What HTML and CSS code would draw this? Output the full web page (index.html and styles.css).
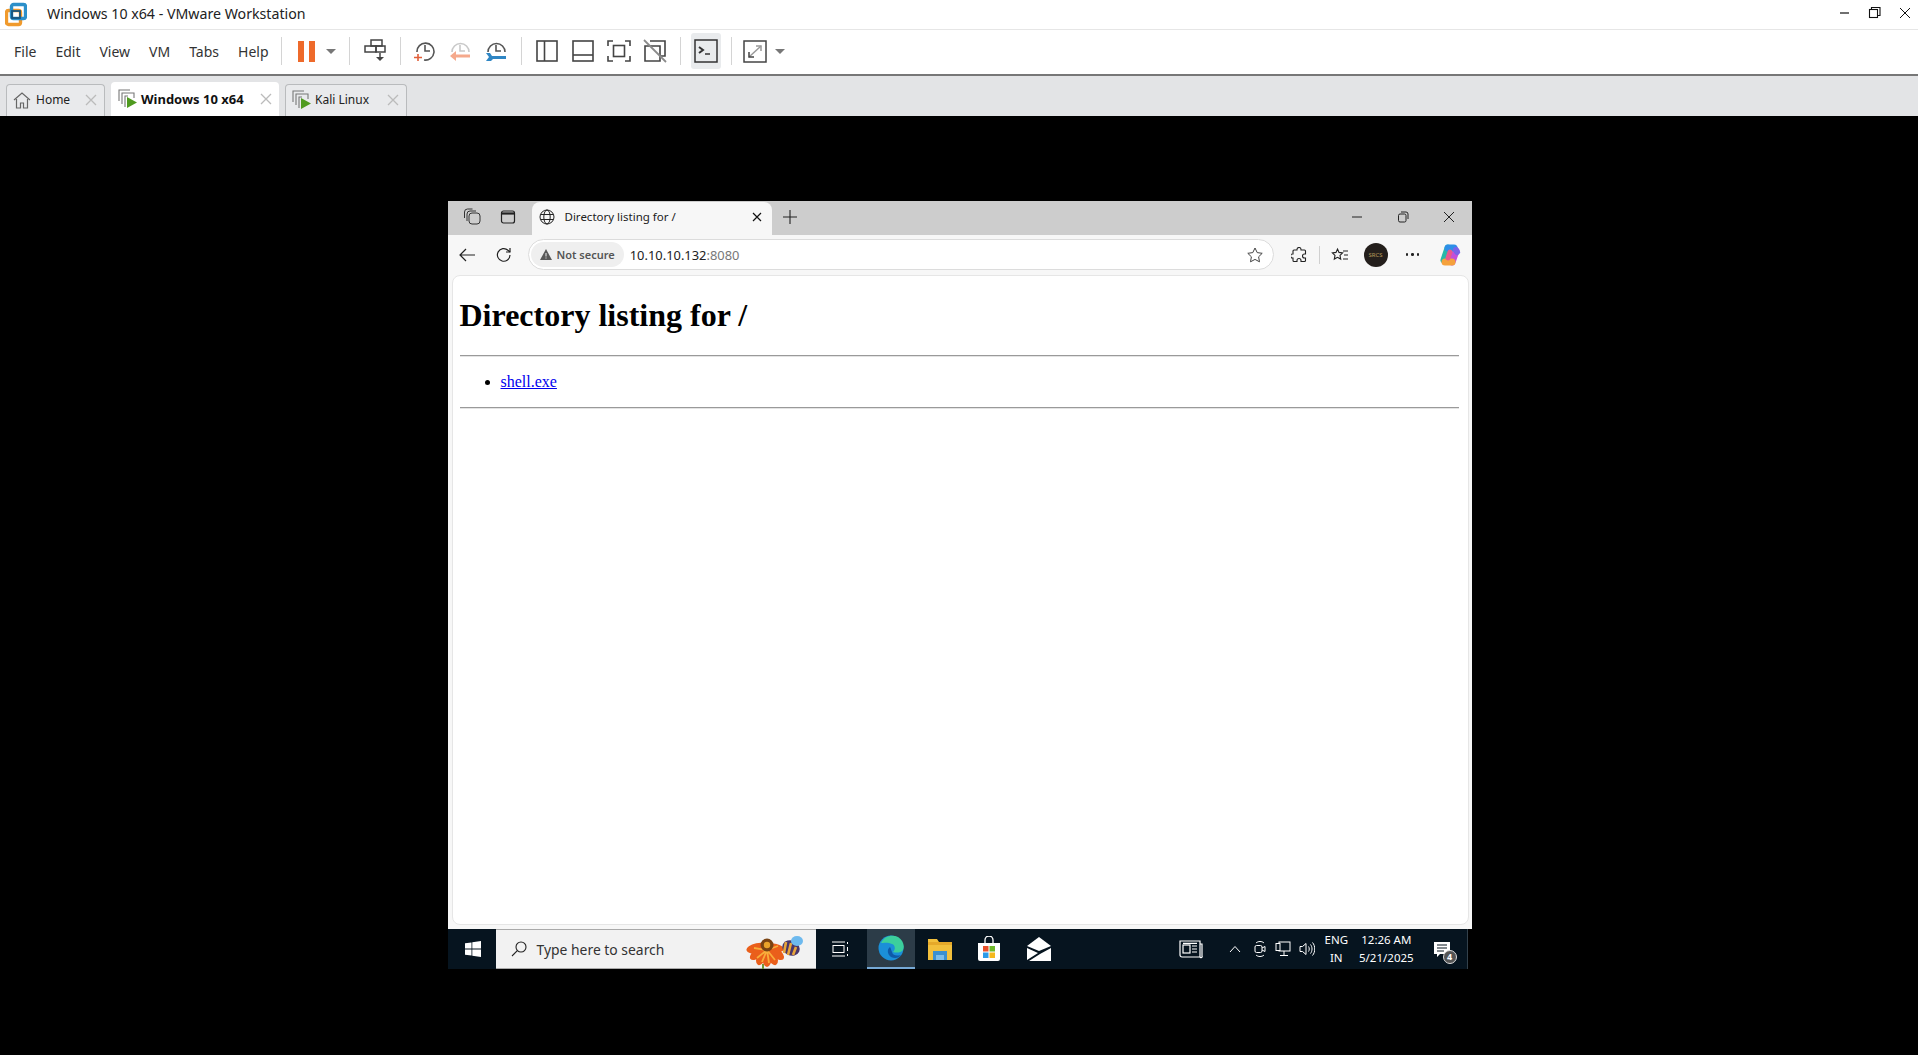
FILE: index.html
```html
<!DOCTYPE html>
<html>
<head>
<meta charset="UTF-8">
<title>Windows 10 x64 - VMware Workstation</title>
<link rel="stylesheet" href="styles.css">
</head>
<body>
<div class="app">

  <!-- title bar -->
  <div class="titlebar">
    <svg class="vm_logo" width="22" height="26" viewBox="0 0 22 26">
      <rect x="1.500" y="8.500" width="14" height="14" rx="2" fill="none" stroke="#f09a2c" stroke-width="3.400"/>
      <rect x="6.500" y="2.500" width="14" height="14" rx="2" fill="none" stroke="#2c8fc9" stroke-width="3.400"/>
      <rect x="7" y="9" width="8" height="7" fill="none" stroke="#17557f" stroke-width="1.800"/>
    </svg>
    <span class="title_text">Windows 10 x64 - VMware Workstation</span>
    <div class="win_ctrls">
      <svg width="14" height="14" viewBox="0 0 14 14"><path d="M2 7h9" stroke="#111" stroke-width="1.200"/></svg>
      <svg width="14" height="14" viewBox="0 0 14 14" fill="none" stroke="#111" stroke-width="1.100"><rect x="1.500" y="3.500" width="8" height="8"/><path d="M3.500 3.500v-2h8.500v8h-2.500"/></svg>
      <svg width="14" height="14" viewBox="0 0 14 14"><path d="M2 2l10 10M12 2L2 12" stroke="#111" stroke-width="1"/></svg>
    </div>
  </div>

  <!-- menu and toolbar -->
  <div class="toolbar">
    <div class="menu">
      <span>File</span><span>Edit</span><span>View</span><span>VM</span><span>Tabs</span><span>Help</span>
    </div>
    <i class="sep sep_a"></i>
    <div class="pause"><b></b><b></b></div>
    <i class="caret caret_a"></i>
    <i class="sep sep_b"></i>
    <svg class="tool t_send" width="22" height="24" viewBox="0 0 22 24" fill="none" stroke="#444" stroke-width="1.500">
      <rect x="7" y="1" width="11" height="6"/><rect x="1" y="7" width="11" height="6"/><rect x="12" y="7" width="9" height="6"/>
      <path d="M16 14v5"/><path d="M12 18h8l-4 4z" fill="#444" stroke="none"/>
    </svg>
    <i class="sep sep_c"></i>
    <svg class="tool t_clock1" width="22" height="22" viewBox="0 0 22 22" fill="none">
      <path d="M4 12a8.500 8.500 0 1 1 7 8" stroke="#555" stroke-width="1.600"/><path d="M12 5v6h5" stroke="#555" stroke-width="1.600"/>
      <path d="M5 14v7M1 17.500h8" stroke="#e2603a" stroke-width="1.600"/>
    </svg>
    <svg class="tool t_clock2" width="22" height="22" viewBox="0 0 22 22" fill="none">
      <path d="M3 12a8.500 8.500 0 1 1 17 0" stroke="#c9c9c9" stroke-width="1.600"/><path d="M11 5v6h5" stroke="#c9c9c9" stroke-width="1.600"/>
      <path d="M21 16H5" stroke="#f5a98c" stroke-width="3"/><path d="M7 11l-6 5 6 5z" fill="#f5a98c"/>
    </svg>
    <svg class="tool t_clock3" width="22" height="22" viewBox="0 0 22 22" fill="none">
      <path d="M3 12a8.500 8.500 0 1 1 17 0" stroke="#555" stroke-width="1.600"/><path d="M11 5v6h5" stroke="#555" stroke-width="1.600"/>
      <path d="M1 13h4l2 3h14v3H8l-2 2H1l3-4z" fill="#2f86c4"/>
    </svg>
    <i class="sep sep_d"></i>
    <svg class="tool t_v1" width="22" height="22" viewBox="0 0 22 22" fill="none" stroke="#444" stroke-width="1.600"><rect x="1" y="1" width="20" height="20"/><path d="M8.500 1v20"/></svg>
    <svg class="tool t_v2" width="22" height="22" viewBox="0 0 22 22" fill="none" stroke="#444" stroke-width="1.600"><rect x="1" y="1" width="20" height="20"/><path d="M1 15h20"/></svg>
    <svg class="tool t_v3" width="24" height="22" viewBox="0 0 24 22" fill="none" stroke="#444" stroke-width="1.600"><path d="M1 6V1h5M18 1h5v5M23 16v5h-5M6 21H1v-5"/><rect x="6.500" y="5.500" width="11" height="11"/></svg>
    <svg class="tool t_v4" width="24" height="24" viewBox="0 0 24 24" fill="none" stroke="#444" stroke-width="1.600"><path d="M7 2h15v15h-5"/><path d="M2 7h15v15H2z"/><path d="M1 1l22 22" stroke="#8a8a8a" stroke-width="1.800"/></svg>
    <i class="sep sep_e"></i>
    <div class="term_btn">
      <svg width="24" height="24" viewBox="0 0 24 24" fill="none" stroke="#333" stroke-width="1.500"><rect x="1" y="1" width="22" height="22"/><path d="M5 8l4 3-4 3" stroke-width="2"/><path d="M11 15h5"/></svg>
    </div>
    <i class="sep sep_f"></i>
    <svg class="tool t_full" width="24" height="23" viewBox="0 0 24 23" fill="none" stroke="#444" stroke-width="1.500"><rect x="1" y="1" width="22" height="21"/><path d="M6 17l12-11" stroke="#999"/><path d="M6 12v5h5"/><path d="M13 6h5v5" stroke="#999"/></svg>
    <i class="caret caret_b"></i>
  </div>

  <!-- vm tabs -->
  <div class="tabstrip">
    <div class="tab tab_home">
      <svg width="18" height="18" viewBox="0 0 18 18" fill="none" stroke="#666" stroke-width="1.200"><path d="M1 9l8-7 8 7M3.500 8v9h4v-5h3v5h4V8"/></svg>
      <span>Home</span>
      <svg class="tab_close" width="12" height="12" viewBox="0 0 12 12"><path d="M1 1l10 10M11 1L1 11" stroke="#bbb" stroke-width="1.300"/></svg>
    </div>
    <div class="tab tab_active">
      <svg width="20" height="20" viewBox="0 0 20 20" fill="none" stroke="#777" stroke-width="1.100"><path d="M1 12V1h11"/><path d="M4 15V4h12v5"/><path d="M7 18V7h3"/><path d="M9 8l10 5.500L9 19z" fill="#4f9a1f" stroke="none"/></svg>
      <span>Windows 10 x64</span>
      <svg class="tab_close" width="12" height="12" viewBox="0 0 12 12"><path d="M1 1l10 10M11 1L1 11" stroke="#bbb" stroke-width="1.300"/></svg>
    </div>
    <div class="tab tab_kali">
      <svg width="20" height="20" viewBox="0 0 20 20" fill="none" stroke="#777" stroke-width="1.100"><path d="M1 12V1h11"/><path d="M4 15V4h12v5"/><path d="M7 18V7h3"/><path d="M9 8l10 5.500L9 19z" fill="#4f9a1f" stroke="none"/></svg>
      <span>Kali Linux</span>
      <svg class="tab_close" width="12" height="12" viewBox="0 0 12 12"><path d="M1 1l10 10M11 1L1 11" stroke="#bbb" stroke-width="1.300"/></svg>
    </div>
  </div>

  <!-- guest screen -->
  <div class="stage">
    <div class="guest">

      <div class="edge_tabs">
        <svg class="etool e_work" width="18" height="18" viewBox="0 0 18 18" fill="none" stroke="#333" stroke-width="1"><rect x="6" y="5" width="11" height="11" rx="3"/><path d="M4 13V6a3 3 0 0 1 3-3h6"/><path d="M1.500 10V4a3 3 0 0 1 3-3h5"/></svg>
        <svg class="etool e_tabs" width="16" height="16" viewBox="0 0 16 16" fill="none" stroke="#222" stroke-width="1.200"><rect x="1.500" y="2" width="13" height="12" rx="2"/><path d="M1.500 4.500h13" stroke-width="2.200"/></svg>
        <div class="edge_tab">
          <svg width="16" height="16" viewBox="0 0 16 16" fill="none" stroke="#222" stroke-width="1"><circle cx="8" cy="8" r="7"/><ellipse cx="8" cy="8" rx="3.200" ry="7"/><path d="M1.500 5.500h13M1.500 10.500h13"/></svg>
          <span>Directory listing for /</span>
          <svg class="tab_x" width="10" height="10" viewBox="0 0 10 10"><path d="M1 1l8 8M9 1L1 9" stroke="#111" stroke-width="1.200"/></svg>
        </div>
        <svg class="e_plus" width="14" height="14" viewBox="0 0 14 14"><path d="M7 0v14M0 7h14" stroke="#222" stroke-width="1.100"/></svg>
        <div class="edge_ctrls">
          <svg width="12" height="12" viewBox="0 0 12 12"><path d="M1 6h10" stroke="#222" stroke-width="1"/></svg>
          <svg width="12" height="12" viewBox="0 0 12 12" fill="none" stroke="#222" stroke-width="1"><rect x="1.500" y="3" width="7.500" height="8" rx="1.500"/><path d="M4 1h5a2 2 0 0 1 2 2v5"/></svg>
          <svg width="12" height="12" viewBox="0 0 12 12"><path d="M1 1l10 10M11 1L1 11" stroke="#222" stroke-width="1"/></svg>
        </div>
      </div>

      <div class="edge_bar">
        <svg class="bar_back" width="18" height="16" viewBox="0 0 18 16" fill="none" stroke="#222" stroke-width="1.200"><path d="M17 8H2M8 2L2 8l6 6"/></svg>
        <svg class="bar_reload" width="16" height="16" viewBox="0 0 16 16" fill="none" stroke="#222" stroke-width="1.200"><path d="M14 8a6.300 6.300 0 1 1-2-4.700L14 5"/><path d="M14 1v4h-4"/></svg>
        <div class="address">
          <div class="not_secure">
            <svg width="12" height="11" viewBox="0 0 12 11"><path d="M6 0l6 11H0z" fill="#5a5a5a"/><path d="M6 4v3.500M6 8.500v1" stroke="#eee" stroke-width="1"/></svg>
            <span>Not secure</span>
          </div>
          <span class="url">10.10.10.132<span class="port">:8080</span></span>
          <svg class="addr_star" width="16" height="16" viewBox="0 0 16 16" fill="none" stroke="#444" stroke-width="1"><path d="M8 1l2.200 4.600 5 .7-3.600 3.500.9 5L8 12.400 3.500 14.800l.9-5L.8 6.300l5-.7z"/></svg>
        </div>
        <svg class="bar_ext" width="16" height="16" viewBox="0 0 16 16" fill="none" stroke="#222" stroke-width="1.100"><path d="M6 2.500a2 2 0 0 1 4 0V3h3.500a1 1 0 0 1 1 1v3h-1a2 2 0 0 0 0 4h1v2.500a1 1 0 0 1-1 1H10v-1a2 2 0 0 0-4 0v1H3a1 1 0 0 1-1-1V11h-.5a2 2 0 0 1 0-4H2V4a1 1 0 0 1 1-1h3z"/></svg>
        <i class="bar_sep"></i>
        <svg class="bar_fav" width="18" height="16" viewBox="0 0 18 16" fill="none" stroke="#222" stroke-width="1.100"><path d="M6.500 2l1.500 3.400 3.600.5-2.600 2.500.7 3.700-3.200-1.800-3.200 1.800.7-3.700L1.400 5.900 5 5.400z"/><path d="M12 4h5M13 8h4M12 12h5"/></svg>
        <div class="avatar">SRCS</div>
        <div class="bar_dots"><b></b><b></b><b></b></div>
        <svg class="bar_copilot" width="22" height="22" viewBox="0 0 22 22" fill="none" stroke-linecap="round">
          <path d="M17 7l-4 11" stroke="#c44fd8" stroke-width="7"/>
          <path d="M9 4l-4 12" stroke="#28b8a8" stroke-width="7"/>
          <path d="M9 4h6" stroke="#2d8fe8" stroke-width="7"/>
          <path d="M6 18h7" stroke="#f5a13c" stroke-width="7"/>
          <path d="M11 8l-2 6" stroke="#e8578f" stroke-width="5"/>
          <path d="M17 6l1 2" stroke="#7a63e8" stroke-width="6"/>
        </svg>
      </div>

      <div class="edge_page">
        <div class="page_card">
          <h1>Directory listing for /</h1>
          <hr>
          <ul>
            <li><a href="#">shell.exe</a></li>
          </ul>
          <hr>
        </div>
      </div>

      <div class="taskbar">
        <svg class="tb_start" width="16" height="16" viewBox="0 0 16 16" fill="#fff"><path d="M0 2.300l6.500-.9v6.200H0zM7.300 1.300L16 0v7.600H7.300zM0 8.400h6.500v6.200L0 13.700zM7.300 8.400H16V16l-8.700-1.200z"/></svg>
        <div class="tb_search">
          <svg width="16" height="16" viewBox="0 0 16 16" fill="none" stroke="#222" stroke-width="1.100"><circle cx="10" cy="6" r="5"/><path d="M6.300 9.700L1 15"/></svg>
          <span>Type here to search</span>
          <svg class="flower" width="58" height="39" viewBox="0 0 58 39">
            <path d="M17 34v5" stroke="#6a9a3a" stroke-width="2"/>
            <g fill="#ea5f1b">
              <ellipse cx="21" cy="26" rx="5" ry="11" transform="rotate(78 21 16)"/>
              <ellipse cx="21" cy="26" rx="5" ry="11" transform="rotate(52 21 16)"/>
              <ellipse cx="21" cy="26" rx="5" ry="11" transform="rotate(26 21 16)"/>
              <ellipse cx="21" cy="26" rx="5" ry="11" transform="rotate(0 21 16)"/>
              <ellipse cx="21" cy="26" rx="5" ry="11" transform="rotate(-26 21 16)"/>
              <ellipse cx="21" cy="26" rx="5" ry="11" transform="rotate(-52 21 16)"/>
              <ellipse cx="21" cy="25" rx="4" ry="8" transform="rotate(-78 21 16)"/>
            </g>
            <path d="M21 20l-13-2M21 20l-10 8M21 20l-5 12M21 20l2 13M21 20l8 10M21 20l11-4" stroke="#f8ad3a" stroke-width="1.800"/>
            <circle cx="21" cy="15" r="6.500" fill="#7a4312"/><circle cx="21" cy="15" r="3.200" fill="#e9a32a"/>
            <ellipse cx="45" cy="18" rx="9" ry="7.500" fill="#49356b" transform="rotate(25 45 18)"/>
            <path d="M40 12l-2 11M45 13l-3 12M50 17l-3 8" stroke="#e8a53a" stroke-width="2.600"/>
            <ellipse cx="51" cy="11" rx="6" ry="5" fill="#6db9ee"/>
          </svg>
        </div>
        <svg class="tb_view" width="16" height="16" viewBox="0 0 16 16" fill="none" stroke="#fff" stroke-width="1"><path d="M0 1h13M0 15h13"/><rect x="1" y="4.500" width="11" height="7"/><path d="M15.500 1v2M15.500 6v4M15.500 13v2"/></svg>
        <div class="tb_edge">
          <svg width="26" height="26" viewBox="0 0 26 26">
            <circle cx="13" cy="13" r="12.500" fill="#1b8fd8"/>
            <path d="M3 8C6 1 14-1 20 2c5 3 7 9 5 13-2 3-7 3-10 2 3-3 2-7-1-8C10 7 5 8 3 8z" fill="#3ccf9c"/>
            <path d="M12 12c-3 2-3 7 1 10 4 2 8 1 10-2-4 1-8 1-9-3-1-2-1-4-2-5z" fill="#0e5aa8"/>
          </svg>
        </div>
        <svg class="tb_app tb_files" width="24" height="22" viewBox="0 0 24 22"><path d="M0 1h9l2 3h13v18H0z" fill="#f2c03c"/><rect y="4" width="24" height="3" fill="#e5a92a"/><path d="M5 13h14v9h-3v-5H8v5H5z" fill="#3b90d0"/><rect x="8" y="17" width="8" height="5" fill="#7dbde8"/></svg>
        <svg class="tb_app tb_store" width="24" height="26" viewBox="0 0 24 26"><path d="M1 7h22v16a2 2 0 0 1-2 2H3a2 2 0 0 1-2-2z" fill="#fff"/><path d="M8 7V4a4 4 0 0 1 8 0v3" fill="none" stroke="#fff" stroke-width="1.300"/><rect x="6" y="10" width="5.500" height="5.500" fill="#e8502a"/><rect x="12.500" y="10" width="5.500" height="5.500" fill="#6eb82a"/><rect x="6" y="16.500" width="5.500" height="5.500" fill="#2a9ae8"/><rect x="12.500" y="16.500" width="5.500" height="5.500" fill="#f5b81e"/></svg>
        <svg class="tb_app tb_mail" width="24" height="24" viewBox="0 0 24 24" fill="#fff"><path d="M12 0l12 9-12 5L0 9z"/><path d="M0 11l11 5-11 7zM24 11v13H2l11-7z"/></svg>
        <svg class="tb_news" width="24" height="20" viewBox="0 0 24 20" fill="none" stroke="#fff" stroke-width="1.200"><path d="M1 2h20v16H3a2 2 0 0 1-2-2z"/><path d="M21 5h2v12a1 1 0 0 1-2 1"/><rect x="4" y="6" width="7" height="8"/><path d="M13 7h5M13 10h5M13 13h5M4 4.300h14"/></svg>
        <svg class="tb_chev" width="12" height="8" viewBox="0 0 12 8" fill="none" stroke="#fff" stroke-width="1"><path d="M1 7l5-5.500L11 7"/></svg>
        <svg class="tb_tray t_meet" width="12" height="18" viewBox="0 0 12 18" fill="none" stroke="#fff" stroke-width="1"><rect x="1" y="5.500" width="7" height="7" rx="1.500"/><path d="M8 8l3-1.500v5L8 10M2 3c2-2 6-2 8 0M2 15c2 2 6 2 8 0"/></svg>
        <svg class="tb_tray t_net" width="16" height="16" viewBox="0 0 16 16" fill="none" stroke="#fff" stroke-width="1"><rect x="4" y="1" width="11" height="9"/><rect x="1" y="2.500" width="4" height="7" fill="#06141f"/><path d="M9 10v4M5 14.500h8"/></svg>
        <svg class="tb_tray t_vol" width="16" height="16" viewBox="0 0 16 16" fill="none" stroke="#fff" stroke-width="1"><path d="M1 5.500h2.500L7 2.500v11l-3.500-3H1z"/><path d="M9.500 5.500c1 1.500 1 3.500 0 5M11.500 3.500c2 2.500 2 6.500 0 9M13.500 1.500c3 3.500 3 9.500 0 13"/></svg>
        <div class="tb_lang"><span>ENG</span><span>IN</span></div>
        <div class="tb_clock"><span>12:26 AM</span><span>5/21/2025</span></div>
        <div class="tb_note">
          <svg width="16" height="16" viewBox="0 0 16 16" fill="#fff"><path d="M0 0h16v12H6l-3 3v-3H0z"/><path d="M3 3h10M3 6h10M3 9h7" stroke="#06141f" stroke-width="1"/></svg>
          <b>4</b>
        </div>
      </div>

    </div>
  </div>

</div>
</body>
</html>
```

FILE: styles.css
```css
html, body {
  margin: 0;
  height: 100%;
  overflow: hidden;
}

.app {
  display: flex;
  flex-direction: column;
  height: 1055px;
  font-family: "Noto Sans", "Open Sans", sans-serif;
  color: #222;
  background: #000;
}

/* title bar */
.titlebar {
  height: 29px;
  display: flex;
  align-items: center;
  background: #fff;
  border-bottom: 1px solid #e6e6e6;
  flex: none;
}
.vm_logo {
  margin-left: 5px;
  flex: none;
}
.title_text {
  margin-left: 20px;
  padding-bottom: 2px;
  font-size: 14.200px;
  color: #222;
}
.win_ctrls {
  margin-left: auto;
  margin-right: 6px;
  padding-bottom: 3px;
  display: flex;
  gap: 16px;
}

/* toolbar */
.toolbar {
  height: 42px;
  padding-bottom: 2px;
  display: flex;
  align-items: center;
  background: #fff;
  border-bottom: 2px solid #777;
  flex: none;
}
.menu {
  display: flex;
  gap: 19px;
  margin-left: 14px;
  font-size: 14px;
  color: #333;
}
.sep {
  width: 1px;
  height: 28px;
  background: #d4d4d4;
  flex: none;
}
.sep_a { margin-left: 12px; }
.pause {
  display: flex;
  gap: 5px;
  margin-left: 16px;
}
.pause b {
  width: 6px;
  height: 21px;
  background: #ee6a2b;
}
.caret {
  width: 0;
  height: 0;
  border-left: 5px solid transparent;
  border-right: 5px solid transparent;
  border-top: 5px solid #777;
  flex: none;
}
.caret_a { margin-left: 11px; }
.sep_b { margin-left: 13px; }
.tool { flex: none; }
.t_send { margin-left: 14px; }
.sep_c { margin-left: 14px; }
.t_clock1 { margin-left: 12px; }
.t_clock2 { margin-left: 14px; }
.t_clock3 { margin-left: 14px; }
.sep_d { margin-left: 14px; }
.t_v1 { margin-left: 14px; }
.t_v2 { margin-left: 14px; }
.t_v3 { margin-left: 13px; }
.t_v4 { margin-left: 12px; }
.sep_e { margin-left: 13px; }
.term_btn {
  width: 30px;
  height: 36px;
  margin-left: 10px;
  display: flex;
  align-items: center;
  justify-content: center;
  background: #e9ebed;
  border-radius: 3px;
}
.sep_f { margin-left: 10px; }
.t_full { margin-left: 11px; }
.caret_b { margin-left: 8px; }

/* vm tabs */
.tabstrip {
  height: 40px;
  display: flex;
  align-items: flex-end;
  gap: 6px;
  padding-left: 6px;
  background: #e3e4e6;
  flex: none;
}
.tab {
  height: 32px;
  box-sizing: border-box;
  display: flex;
  align-items: center;
  padding-left: 6px;
  padding-bottom: 2px;
  font-size: 12px;
  background: #e9eaec;
  border: 1px solid #b9bbbd;
  border-bottom: none;
  border-radius: 4px 4px 0 0;
  color: #222;
}
.tab_close {
  margin-left: auto;
  margin-right: 7px;
}
.tab span { margin-left: 5px; }
.tab_home { width: 99px; }
.tab_active {
  width: 168px;
  height: 34px;
  padding-left: 7px;
  padding-bottom: 0;
  background: #fff;
  border: none;
  font-weight: 700;
  font-size: 13px;
  color: #111;
}
.tab_active span { margin-left: 3px; }
.tab_kali { width: 122px; }
.tab_kali span { margin-left: 3px; }

/* guest */
.stage {
  flex: 1;
  display: flex;
  justify-content: center;
  padding-top: 85px;
  background: #000;
}
.guest {
  width: 1024px;
  height: 768px;
  margin-left: 1px;
  display: flex;
  flex-direction: column;
  background: #f7f7f7;
}

.edge_tabs {
  height: 34px;
  padding-bottom: 2px;
  box-sizing: border-box;
  display: flex;
  align-items: center;
  background: #cdcdcd;
  flex: none;
}
.etool { flex: none; }
.e_work { margin-left: 15px; }
.e_tabs { margin-left: 19px; }
.edge_tab {
  width: 240px;
  height: 33px;
  margin-left: 16px;
  margin-bottom: -2px;
  align-self: flex-end;
  display: flex;
  align-items: center;
  padding-left: 7px;
  padding-bottom: 4px;
  box-sizing: border-box;
  background: #f7f7f7;
  border-radius: 8px 8px 0 0;
  font-size: 11.500px;
  color: #222;
}
.edge_tab span { margin-left: 10px; }
.tab_x { margin-left: auto; margin-right: 10px; }
.e_plus { margin-left: 11px; }
.edge_ctrls {
  margin-left: auto;
  margin-right: 17px;
  display: flex;
  gap: 34px;
}

.edge_bar {
  height: 38px;
  box-sizing: border-box;
  padding-top: 1px;
  display: flex;
  align-items: center;
  background: #f7f7f7;
  flex: none;
}
.bar_back { margin-left: 10px; flex: none; }
.bar_reload { margin-left: 20px; flex: none; }
.address {
  width: 746px;
  height: 31px;
  margin-left: 16px;
  display: flex;
  align-items: center;
  box-sizing: border-box;
  background: #fff;
  border: 1px solid #dcdcdc;
  border-radius: 16px;
  flex: none;
}
.not_secure {
  height: 25px;
  margin-left: 2px;
  padding: 0 9px;
  display: flex;
  align-items: center;
  gap: 5px;
  background: #efefef;
  border-radius: 13px;
  font-size: 11px;
  font-weight: 600;
  color: #555;
}
.url {
  margin-left: 6px;
  font-size: 12.900px;
  color: #222;
}
.port { color: #777; }
.addr_star { margin-left: auto; margin-right: 10px; }
.bar_ext { margin-left: 17px; flex: none; }
.bar_sep {
  width: 1px;
  height: 18px;
  margin-left: 12px;
  background: #d0d0d0;
  flex: none;
}
.bar_fav { margin-left: 11px; flex: none; }
.avatar {
  width: 24px;
  height: 24px;
  margin-left: 15px;
  display: flex;
  align-items: center;
  justify-content: center;
  border-radius: 50%;
  background: #241f1c;
  color: #b89a5a;
  font-size: 6px;
  flex: none;
}
.bar_dots {
  display: flex;
  gap: 3px;
  margin-left: 18px;
}
.bar_dots b {
  width: 2.500px;
  height: 2.500px;
  border-radius: 50%;
  background: #222;
}
.bar_copilot { margin-left: 20px; flex: none; }

.edge_page {
  flex: 1;
  padding: 2px 3px 4px 4px;
  min-height: 0;
}
.page_card {
  height: 100%;
  box-sizing: border-box;
  padding: 8px 9px 0 7px;
  background: #fff;
  border: 1px solid #e6e6e6;
  border-radius: 8px;
  font-family: "Liberation Serif", serif;
  font-size: 16px;
  color: #000;
}
.page_card h1 {
  margin: 13px 0 21px;
  font-size: 32px;
  line-height: 37px;
}
.page_card hr {
  margin: 0;
  border: none;
  border-top: 1px solid #9a9a9a;
  border-bottom: 1px solid #e4e4e4;
}
.page_card ul {
  margin: 16px 0;
  padding-left: 41px;
}
.page_card a { color: #0000ee; }

/* taskbar */
.taskbar {
  height: 40px;
  display: flex;
  align-items: center;
  background: #06141f;
  border-right: 4px solid #000;
  box-shadow: inset -1px 0 #33414b;
  color: #fff;
  flex: none;
}
.tb_start { margin-left: 17px; flex: none; }
.tb_search {
  width: 320px;
  height: 40px;
  margin-left: 15px;
  box-sizing: border-box;
  display: flex;
  align-items: center;
  padding-left: 15px;
  background: #f2f2f2;
  border-top: 1px solid #a9a9a9;
  border-bottom: 1px solid #a9a9a9;
  font-size: 13.900px;
  color: #333;
  flex: none;
}
.tb_search span { margin-left: 10px; }
.flower { margin-left: auto; margin-right: 12px; }
.tb_view { margin-left: 16px; flex: none; }
.tb_edge {
  width: 48px;
  height: 40px;
  margin-left: 19px;
  box-sizing: border-box;
  display: flex;
  align-items: center;
  justify-content: center;
  background: #2c3c48;
  border-bottom: 2px solid #76a9d6;
  flex: none;
}
.tb_app { flex: none; }
.tb_files { margin-left: 13px; }
.tb_store { margin-left: 25px; }
.tb_mail { margin-left: 26px; }
.tb_news { margin-left: 128px; flex: none; }
.tb_chev { margin-left: 26px; flex: none; }
.tb_tray { flex: none; }
.t_meet { margin-left: 13px; }
.t_net { margin-left: 9px; }
.t_vol { margin-left: 8px; }
.tb_lang, .tb_clock {
  display: flex;
  flex-direction: column;
  align-items: center;
  font-size: 11.500px;
  line-height: 18px;
  flex: none;
}
.tb_lang { margin-left: 10px; }
.tb_clock { margin-left: 11px; }
.tb_note {
  position: relative;
  margin-left: 20px;
  width: 16px;
  height: 16px;
  flex: none;
}
.tb_note b {
  position: absolute;
  right: -7px;
  bottom: -7px;
  width: 14px;
  height: 14px;
  border-radius: 50%;
  background: #555;
  border: 1px solid #ddd;
  box-sizing: border-box;
  font-size: 9px;
  line-height: 12px;
  text-align: center;
}
```
